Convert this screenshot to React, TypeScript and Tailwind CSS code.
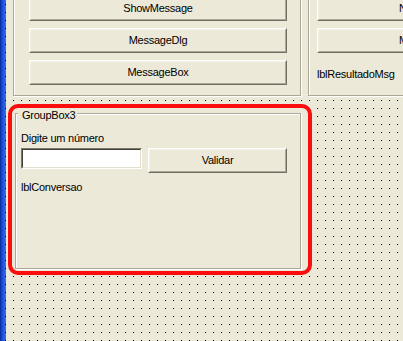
import React from "react";

function Btn({ label, w, align = "center" }: { label: string; w: string; align?: "center" | "start" }) {
  return (
    <div
      className={`flex h-[25px] shrink-0 border border-t-white border-l-white border-r-[#716f64] border-b-[#716f64] ${w}`}
    >
      <div
        className={`flex flex-1 items-center whitespace-nowrap overflow-hidden border border-t-[#f4f2e8] border-l-[#f4f2e8] border-r-[#aca899] border-b-[#aca899] bg-[#ece9d8] ${
          align === "center" ? "justify-center" : "justify-start pl-[80px]"
        }`}
      >
        {label}
      </div>
    </div>
  );
}

export default function App() {
  return (
    <div className="flex h-[341px] w-[403px] overflow-hidden bg-black bg-[linear-gradient(to_right,transparent_1px,#ece9d8_1px),linear-gradient(to_bottom,transparent_1px,#ece9d8_1px)] bg-size-[8px_8px] bg-position-[5px_4px] font-['Liberation_Sans',Arial,sans-serif] text-[11px] leading-[13px] tracking-[-0.25px] text-black">
      {/* left window edge */}
      <div className="flex h-full w-[6px] shrink-0">
        <div className="h-full w-[5px] bg-gradient-to-r from-[#0a2a9c] via-[#1c4fd6] to-[#2f66ea]" />
        <div className="h-full w-[1px] bg-[#2f66ea] bg-[linear-gradient(to_bottom,#000_1px,transparent_1px)] bg-size-[1px_8px] bg-position-[0_4px]" />
      </div>

      <div className="flex w-[397px] shrink-0 flex-col">
        {/* top row of group boxes */}
        <div className="flex h-[98px] shrink-0">
          <div className="h-full w-[299px] shrink-0 overflow-hidden bg-[#ece9d8] pl-[7px]">
            <div className="-mt-[20px] flex h-[116px] w-[288px] flex-col gap-[7px] border border-[#aca899] pl-[15px] pt-[15px] shadow-[inset_1px_1px_0_#fff,1px_1px_0_#fff]">
              <Btn label="ShowMessage" w="w-[258px]" />
              <Btn label="MessageDlg" w="w-[258px]" />
              <Btn label="MessageBox" w="w-[258px]" />
            </div>
          </div>
          <div className="h-[100px] flex-1 overflow-hidden bg-[#ece9d8] pl-[3px]">
            <div className="-mt-[20px] flex h-[116px] w-[300px] flex-col border border-[#aca899] pl-[8px] pt-[15px] shadow-[inset_1px_1px_0_#fff,1px_1px_0_#fff]">
              <div className="flex flex-col gap-[7px]">
                <Btn label="Notificar" w="w-[258px]" align="start" />
                <Btn label="Mensagem" w="w-[258px]" align="start" />
              </div>
              <div className="mt-[15px]">lblResultadoMsg</div>
            </div>
          </div>
        </div>

        {/* GroupBox3 highlighted */}
        <div className="ml-[2px] mt-[6px] h-[171px] w-[304px] shrink-0 rounded-[10px] border-4 border-[#fb0d0d] bg-[#ece9d8] pl-[3px] pt-[5px]">
          <div className="relative flex h-[156px] w-[286px] flex-col border border-[#aca899] pl-[5px] pt-[18px] shadow-[inset_1px_1px_0_#fff,1px_1px_0_#fff]">
            <span className="absolute left-[2px] top-[-5px] bg-[#ece9d8] pl-[4px] pr-[2px]">GroupBox3</span>
            <div>Digite um número</div>
            <div className="mt-[3px] flex items-start gap-[6px]">
              <div className="h-[21px] w-[121px] border border-t-[#7a7869] border-l-[#7a7869] border-r-white border-b-white">
                <div className="h-full w-full border border-t-[#404040] border-l-[#404040] border-r-[#e2dfd0] border-b-[#e2dfd0] bg-white" />
              </div>
              <Btn label="Validar" w="w-[139px]" />
            </div>
            <div className="mt-[8px]">lblConversao</div>
          </div>
        </div>
      </div>
    </div>
  );
}
